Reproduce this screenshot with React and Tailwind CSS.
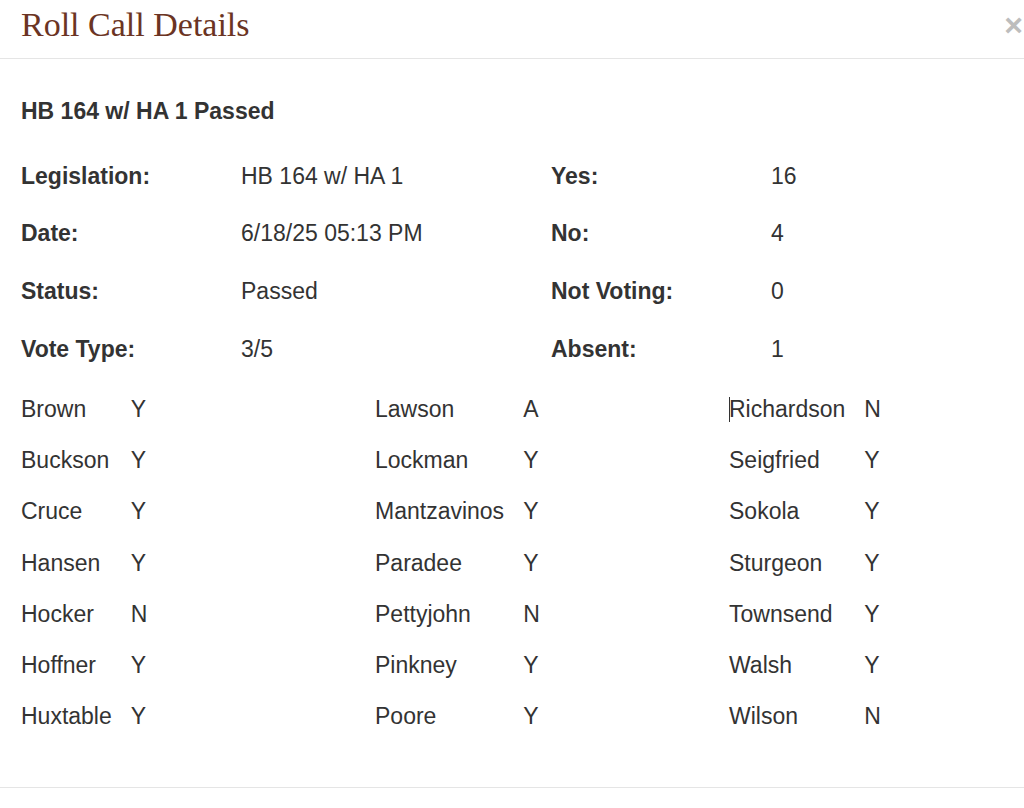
import React from 'react';

const summary = [
  ['Legislation:', 'HB 164 w/ HA 1', 'Yes:', '16'],
  ['Date:', '6/18/25 05:13 PM', 'No:', '4'],
  ['Status:', 'Passed', 'Not Voting:', '0'],
  ['Vote Type:', '3/5', 'Absent:', '1'],
];

const votes = [
  [
    ['Brown', 'Y'], ['Buckson', 'Y'], ['Cruce', 'Y'], ['Hansen', 'Y'],
    ['Hocker', 'N'], ['Hoffner', 'Y'], ['Huxtable', 'Y'],
  ],
  [
    ['Lawson', 'A'], ['Lockman', 'Y'], ['Mantzavinos', 'Y'], ['Paradee', 'Y'],
    ['Pettyjohn', 'N'], ['Pinkney', 'Y'], ['Poore', 'Y'],
  ],
  [
    ['Richardson', 'N'], ['Seigfried', 'Y'], ['Sokola', 'Y'], ['Sturgeon', 'Y'],
    ['Townsend', 'Y'], ['Walsh', 'Y'], ['Wilson', 'N'],
  ],
];

function VoteTable({ rows, caret }) {
  return (
    <table className="border-collapse">
      <tbody>
        {rows.map(([name, v], i) => (
          <tr key={name} className="h-[51.2px]">
            <td className="pr-[19px] align-middle relative">
              {caret && i === 0 && (
                <span className="absolute left-0 top-[13px] w-px h-[25px] bg-[#333]"></span>
              )}
              {name}
            </td>
            <td className="align-middle">{v}</td>
          </tr>
        ))}
      </tbody>
    </table>
  );
}

export default function App() {
  return (
    <div className="w-[1024px] h-[808px] bg-white overflow-hidden" style={{ fontFamily: '"Liberation Sans", Arial, sans-serif' }}>
      {/* Header */}
      <div className="h-[59px] border-b border-[#e5e5e5] flex items-start justify-between pl-[21px]">
        <h4
          className="text-[34px] leading-none text-[#6b3423] mt-[8px]"
          style={{ fontFamily: '"Liberation Serif", "Times New Roman", serif' }}
        >
          Roll Call Details
        </h4>
        <span className="text-[32px] font-bold leading-none text-[#bdbdbd] mt-[9px] mr-[1px]">×</span>
      </div>

      {/* Body */}
      <div className="h-[729px] border-b border-[#e5e5e5] pl-[21px] text-[23px] text-[#333]">
        <h4 className="font-bold pt-[38px] leading-[28px]">HB 164 w/ HA 1 Passed</h4>

        <div className="mt-[22px]">
          {summary.map(([l1, v1, l2, v2]) => (
            <div key={l1} className="flex h-[57.7px] items-center">
              <div className="w-[220px] font-bold">{l1}</div>
              <div className="w-[310px]">{v1}</div>
              <div className="w-[220px] font-bold">{l2}</div>
              <div>{v2}</div>
            </div>
          ))}
        </div>

        <div className="flex mt-[6px]">
          {votes.map((col, i) => (
            <div key={i} className="w-[354px] shrink-0">
              <VoteTable rows={col} caret={i === 2} />
            </div>
          ))}
        </div>
      </div>
    </div>
  );
}
